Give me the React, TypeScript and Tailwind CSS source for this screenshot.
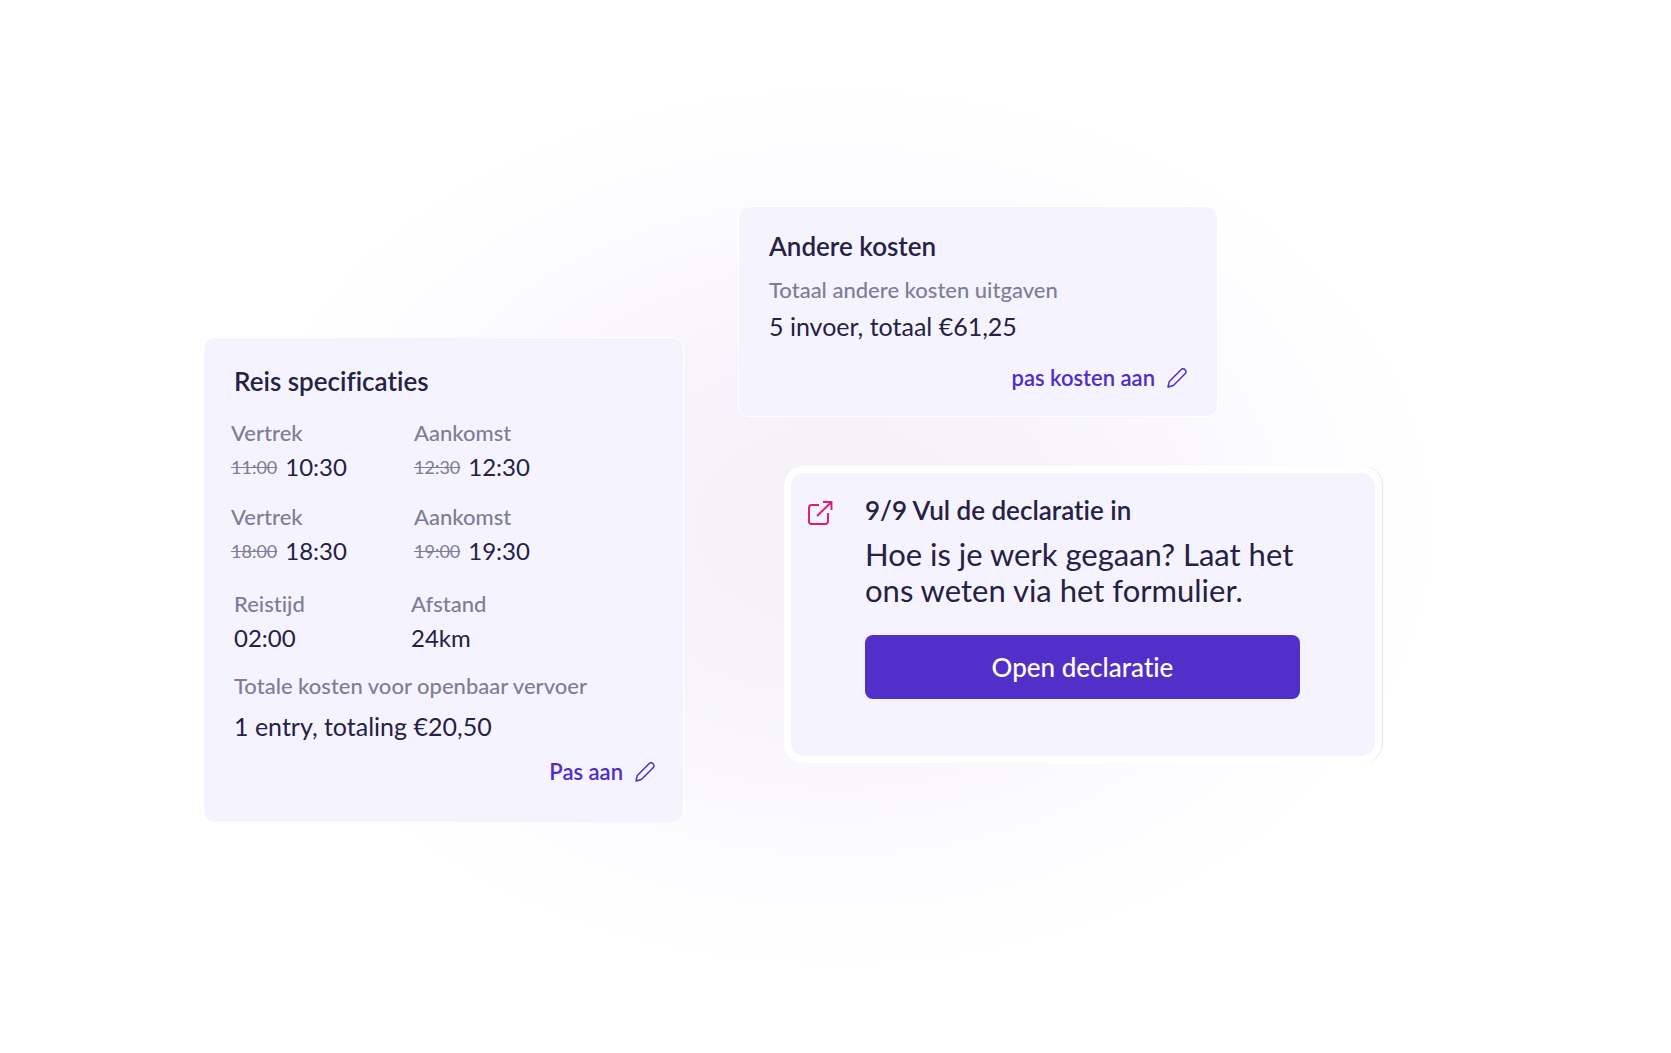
import type { ReactNode } from 'react';

interface FieldProps {
  label: string;
  value: string;
  oldValue?: string;
}

const trips = [
  { departure: '10:30', oldDeparture: '11:00', arrival: '12:30', oldArrival: '12:30' },
  { departure: '18:30', oldDeparture: '18:00', arrival: '19:30', oldArrival: '19:00' },
];

function PencilIcon() {
  return (
    <svg viewBox="0 0 20 20" className="h-5 w-5" fill="none" stroke="currentColor" strokeWidth="1.5" strokeLinejoin="round">
      <path d="M1 19l1.1-4.8c.1-.5.4-.9.7-1.2L14 1.8a2.7 2.7 0 0 1 4.1 0 2.7 2.7 0 0 1 0 4L6.9 17c-.4.4-.8.6-1.2.7z" />
    </svg>
  );
}

function ExternalIcon() {
  return (
    <svg viewBox="0 0 26 26" className="h-[26px] w-[26px] text-[#dd1b76]" fill="none" stroke="currentColor" strokeWidth="1.9">
      <path d="M12 5H4.5A2.5 2.5 0 0 0 2 7.5V21.5A2.5 2.5 0 0 0 4.5 24H18.5A2.5 2.5 0 0 0 21 21.5V13" />
      <path d="M16 2H24.5V10M24 2.5L10 16" />
    </svg>
  );
}

function Card({ className, children }: { className: string; children: ReactNode }) {
  return (
    <section className={`rounded-[10px] bg-[#f5f4fe] pl-[30px] outline-1 outline-white ${className}`}>
      {children}
    </section>
  );
}

function Field({ label, value, oldValue }: FieldProps) {
  return (
    <div>
      <dt className="text-[22px] leading-6 font-medium text-[#807c97]">{label}</dt>
      <dd className="mt-1.5 flex items-center gap-2 text-[24px] leading-8">
        {oldValue && <s className="text-[18px] text-[#807c97]">{oldValue}</s>}
        {value}
      </dd>
    </div>
  );
}

function EditButton({ children }: { children: ReactNode }) {
  return (
    <button type="button" className="ml-auto flex items-center gap-3 text-[22px] leading-6 font-semibold text-[#502ccb]">
      {children}
      <PencilIcon />
    </button>
  );
}

export default function App() {
  return (
    <main
      className="min-h-screen bg-white bg-[radial-gradient(ellipse_36%_42%_at_50%_50%,#f3f0fa_0%,#f7f4fc_40%,#fcfbfe_75%,#ffffff_100%)] pt-[207px] pr-[289px] pb-24 pl-[204px] font-['Lato',sans-serif] text-[#262145] [font-variant-ligatures:none]"
    >
      <div className="grid grid-cols-[479fr_643fr] items-start gap-x-14">
        {/* Trip details */}
        <Card className="mt-[131px] pt-[27px] pr-7 pb-[38px]">
          <h2 className="text-[26px] leading-8 font-semibold">Reis specificaties</h2>
          <dl className="mt-6 -ml-[3px] space-y-[22px]">
            {trips.map((trip) => (
              <div key={trip.departure} className="grid grid-cols-[183px_1fr]">
                <Field label="Vertrek" value={trip.departure} oldValue={trip.oldDeparture} />
                <Field label="Aankomst" value={trip.arrival} oldValue={trip.oldArrival} />
              </div>
            ))}
          </dl>
          <dl className="mt-[25px] grid grid-cols-[177px_1fr]">
            <Field label="Reistijd" value="02:00" />
            <Field label="Afstand" value="24km" />
          </dl>
          <p className="mt-5 text-[22px] leading-6 font-medium text-[#807c97]">Totale kosten voor openbaar vervoer</p>
          <p className="mt-3 mb-[18px] text-[25px] leading-8">1 entry, totaling €20,50</p>
          <EditButton>Pas aan</EditButton>
        </Card>

        <div className="flex flex-col gap-[50px]">
          {/* Other costs */}
          <Card className="w-[478px] max-w-full pt-[23px] pr-[30px] pb-[26px]">
            <h2 className="text-[26px] leading-8 font-semibold">Andere kosten</h2>
            <p className="mt-4 text-[22px] leading-6 font-medium text-[#807c97]">Totaal andere kosten uitgaven</p>
            <p className="mt-2 mb-6 text-[25px] leading-8">5 invoer, totaal €61,25</p>
            <EditButton>pas kosten aan</EditButton>
          </Card>

          {/* Declaration task */}
          <section className="ml-[45px] flex gap-8 rounded-[20px] border-[7px] border-white bg-[#f5f4fe] bg-clip-padding pt-[21px] pr-[75px] pb-[57px] pl-4 shadow-[1px_0_0_#e6e2f5]">
            <div className="mt-1.5 shrink-0">
              <ExternalIcon />
            </div>
            <div className="flex-1">
              <h2 className="text-[26px] leading-8 font-semibold">9/9 Vul de declaratie in</h2>
              <p className="mt-2.5 text-[31px] leading-9">Hoe is je werk gegaan? Laat het ons weten via het formulier.</p>
              <button type="button" className="mt-[27px] h-16 w-full rounded-lg bg-[#532fca] text-[26px] font-medium text-white">
                Open declaratie
              </button>
            </div>
          </section>
        </div>
      </div>
    </main>
  );
}
